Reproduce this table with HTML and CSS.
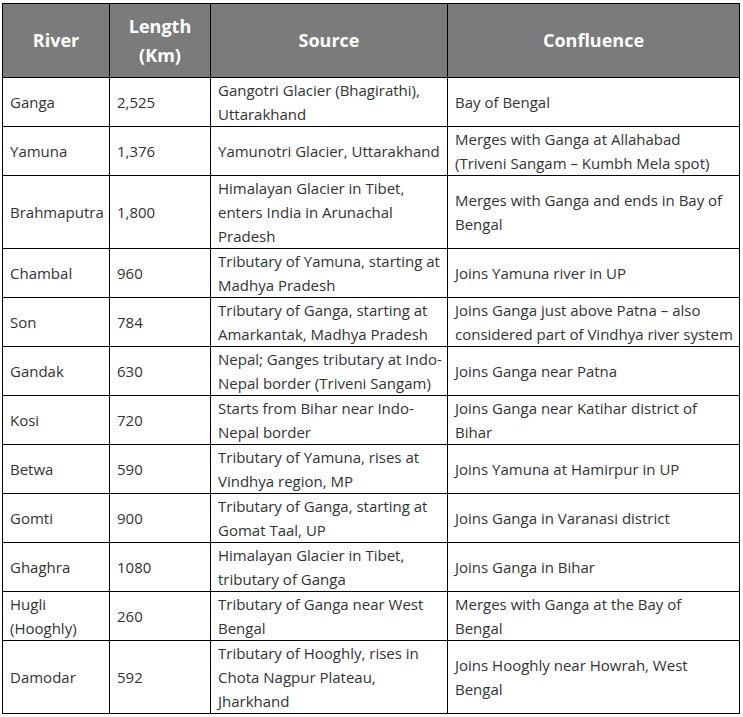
FILE: index.html
```html
<!DOCTYPE html>
<html>
<head>
<meta charset="utf-8">
<link rel="stylesheet" href="styles.css">
</head>
<body>
<table class="rivers">
  <colgroup>
    <col class="c1"><col class="c2"><col class="c3"><col class="c4">
  </colgroup>
  <thead>
    <tr><th>River</th><th>Length (Km)</th><th>Source</th><th>Confluence</th></tr>
  </thead>
  <tbody>
    <tr class="r2"><td>Ganga</td><td>2,525</td><td>Gangotri Glacier (Bhagirathi), Uttarakhand</td><td>Bay of Bengal</td></tr>
    <tr class="r2"><td>Yamuna</td><td>1,376</td><td>Yamunotri Glacier, Uttarakhand</td><td>Merges with Ganga at Allahabad (Triveni Sangam – Kumbh Mela spot)</td></tr>
    <tr class="r3"><td>Brahmaputra</td><td>1,800</td><td>Himalayan Glacier in Tibet, enters India in Arunachal Pradesh</td><td>Merges with Ganga and ends in Bay of Bengal</td></tr>
    <tr class="r2"><td>Chambal</td><td>960</td><td>Tributary of Yamuna, starting at Madhya Pradesh</td><td>Joins Yamuna river in UP</td></tr>
    <tr class="r2"><td>Son</td><td>784</td><td>Tributary of Ganga, starting at Amarkantak, Madhya Pradesh</td><td>Joins Ganga just above Patna – also considered part of Vindhya river system</td></tr>
    <tr class="r2"><td>Gandak</td><td>630</td><td>Nepal; Ganges tributary at Indo-Nepal border (Triveni Sangam)</td><td>Joins Ganga near Patna</td></tr>
    <tr class="r2"><td>Kosi</td><td>720</td><td>Starts from Bihar near Indo-Nepal border</td><td>Joins Ganga near Katihar district of Bihar</td></tr>
    <tr class="r2"><td>Betwa</td><td>590</td><td>Tributary of Yamuna, rises at Vindhya region, MP</td><td>Joins Yamuna at Hamirpur in UP</td></tr>
    <tr class="r2"><td>Gomti</td><td>900</td><td>Tributary of Ganga, starting at Gomat Taal, UP</td><td>Joins Ganga in Varanasi district</td></tr>
    <tr class="r2"><td>Ghaghra</td><td>1080</td><td>Himalayan Glacier in Tibet, tributary of Ganga</td><td>Joins Ganga in Bihar</td></tr>
    <tr class="r2"><td>Hugli (Hooghly)</td><td>260</td><td>Tributary of Ganga near West Bengal</td><td>Merges with Ganga at the Bay of<br>Bengal</td></tr>
    <tr class="r3"><td>Damodar</td><td>592</td><td>Tributary of Hooghly, rises in Chota Nagpur Plateau, Jharkhand</td><td>Joins Hooghly near Howrah, West Bengal</td></tr>
  </tbody>
</table>
</body>
</html>
```
FILE: styles.css
```css
html, body {
  margin: 0;
  padding: 0;
  background: #ffffff;
}
body {
  padding: 3px 0 0 2px;
  font-family: "Open Sans", "Noto Sans", sans-serif;
}
.rivers {
  border-collapse: collapse;
  table-layout: fixed;
  width: 737px;
  color: #333333;
  font-size: 15px;
}
.c1 { width: 107px; }
.c2 { width: 101px; }
.c3 { width: 237px; }
.c4 { width: 292px; }
.rivers th,
.rivers td {
  border: 1px solid #000000;
}
.rivers th {
  background: #7b7b7b;
  color: #ffffff;
  font-weight: 700;
  font-size: 18px;
  line-height: 29px;
  height: 73px;
  padding: 0 4px;
  text-align: center;
  vertical-align: middle;
}
.rivers td {
  line-height: 24px;
  padding: 0 6px 0 7px;
  vertical-align: middle;
  text-align: left;
}
.rivers td:nth-child(3) {
  padding-right: 1px;
}
.r2 td { height: 48px; }
.r3 td { height: 72px; }
```
